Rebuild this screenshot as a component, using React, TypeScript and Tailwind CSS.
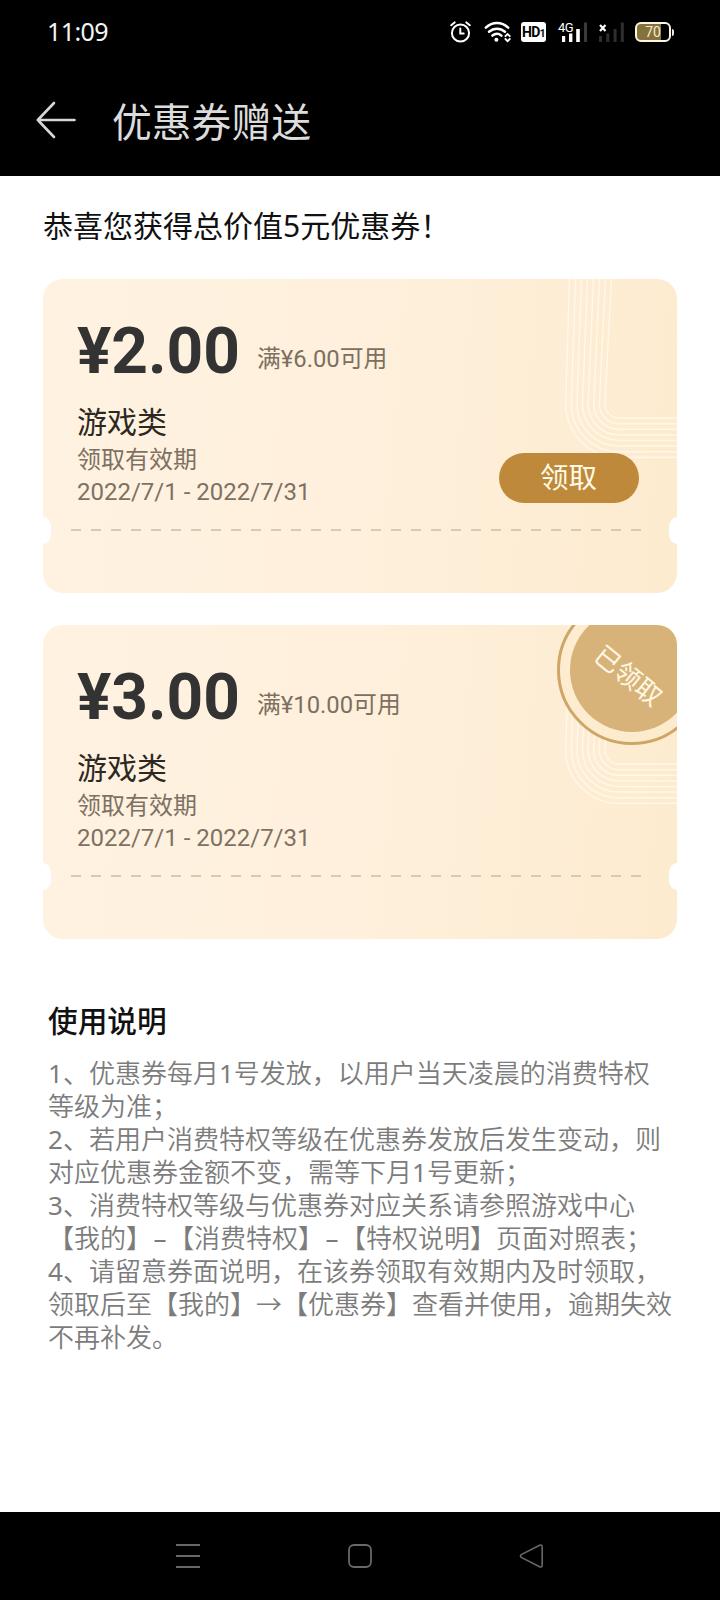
import type { ReactNode } from "react";

const CJK = "font-['Roboto','Noto_Sans_CJK_SC',sans-serif]";
const NOTO = "font-['Noto_Sans','Noto_Sans_CJK_SC',sans-serif]";

function StatusBar() {
  return (
    <div className="flex h-[64px] items-center pl-[47px] pr-[46px]">
      <span className={`${NOTO} -mt-[2px] text-[25px] leading-[30px] tracking-[-0.6px] text-[#f4f4f4]`}>11:09</span>
      <div className="ml-auto flex items-center text-white">
        <svg width="21" height="22" viewBox="0 0 21 22" fill="none" stroke="currentColor" strokeWidth="2" strokeLinecap="round">
          <circle cx="10.5" cy="12" r="8.6" />
          <path d="M10.3 7.5v5h3.4" />
          <path d="M1.2 4.2L4.6 1.4M19.8 4.2L16.4 1.4" />
        </svg>
        <svg className="ml-[13px]" width="28" height="22" viewBox="0 0 28 22" fill="none" stroke="currentColor" strokeWidth="2.5" strokeLinecap="round">
          <path d="M1.8 6.6C8.5 .4 17.5 .4 24.2 6.6" />
          <path d="M5 10.8C9.8 6.6 16.2 6.6 21 10.8" />
          <path d="M8.4 14.6C11.2 12.4 14.8 12.4 17.4 14.6" />
          <circle cx="12.4" cy="18.8" r="2" fill="currentColor" stroke="none" />
          <path d="M21.4 15.2L23.6 13l2.2 2.2M21.4 18l2.2 2.2L25.8 18" strokeWidth="1.8" />
        </svg>
        <div className="ml-[9px] flex h-[20px] w-[25px] items-center justify-center rounded-[3px] bg-white font-['Roboto',sans-serif] text-[14px] font-bold leading-[20px] tracking-[-0.6px] text-black">
          HD<span className="pt-[3px] text-[10px]">1</span>
        </div>
        <div className="relative ml-[12px] h-[20px] w-[30px]">
          <svg width="30" height="20" viewBox="0 0 30 20" fill="currentColor">
            <rect x="4" y="14" width="3.2" height="6" />
            <rect x="11" y="11.5" width="3.4" height="8.5" />
            <rect x="18.2" y="7" width="3.6" height="13" />
            <rect x="26" y="0.5" width="3" height="19.5" fill="#3a3a3a" />
          </svg>
          <span className="absolute left-0 -top-[1px] font-['Roboto',sans-serif] text-[13px] leading-[13px] tracking-[-0.6px]">4G</span>
        </div>
        <svg className="ml-[11px]" width="26" height="20" viewBox="0 0 26 20" fill="#2e2e2e">
          <rect x="0" y="14" width="3" height="6" />
          <rect x="7.3" y="11.5" width="3" height="8.5" />
          <rect x="14.6" y="7" width="3" height="13" />
          <rect x="21.8" y="0.5" width="3" height="19.5" />
          <path d="M1 3l5.5 6M6.5 3L1 9" stroke="#fff" strokeWidth="2.1" />
        </svg>
        <div className="ml-[10px] flex items-center">
          <div className="flex h-[20px] w-[36px] items-center justify-center rounded-[6px] border-2 border-[#fbf6e6] bg-[linear-gradient(90deg,#86713a_24px,#000_24px)] font-['Roboto',sans-serif] text-[14px] leading-[16px] text-[#f3ecd2]">
            70
          </div>
          <div className="ml-[1px] h-[7px] w-[2px] rounded-r-[2px] bg-[#e8e8e8]" />
        </div>
      </div>
    </div>
  );
}

function Ribbon() {
  const lines = Array.from({ length: 8 }, (_, i) => i);
  return (
    <svg className="absolute right-0 top-0" width="120" height="190" viewBox="0 0 120 190" fill="none" stroke="#fff7e8" strokeWidth="1.5">
      {lines.map((i) => {
        const top = 12.5 + i * 6;
        const x = 8.7 + i * 5.6;
        const r = 53.3 - i * 5.6;
        return <path key={i} d={`M${top} -1L${x} 125A${r} ${r} 0 0 0 62 ${125 + r}H121`} />;
      })}
    </svg>
  );
}

function ClaimedSeal() {
  return (
    <div className="absolute left-[514px] top-[-30px] flex size-[150px] items-center justify-center rounded-full border-[3px] border-[#cfa665] bg-[#fdebcd]/80">
      <div className="flex size-[124px] items-center justify-center rounded-full bg-[#d8b379]">
        <span className="translate-x-[-4px] translate-y-[6px] rotate-[39deg] whitespace-nowrap text-[26px] leading-[30px] text-[#fff8e4]">已领取</span>
      </div>
    </div>
  );
}

function Coupon({ price, rule, children }: { price: string; rule: string; children: ReactNode }) {
  return (
    <section className={`${CJK} relative h-[314px] overflow-hidden rounded-[20px] bg-[linear-gradient(95deg,#fff2e1,#fef0dc_50%,#fdebcf)]`}>
      <Ribbon />
      <div className="flex flex-col pl-[34px] pt-[35px]">
        <div className="flex items-baseline">
          <span className="text-[64px] font-bold leading-[76px] text-[#333]">{price}</span>
          <span className="ml-[17px] -translate-y-[6px] text-[23.8px] leading-[30px] text-[#7c6f60]">{rule}</span>
        </div>
        <h2 className="mt-[14px] text-[30px] leading-[38px] text-[#2d2822]">游戏类</h2>
        <p className="mt-[2px] text-[24px] leading-[32px] text-[#7e7163]">领取有效期</p>
        <p className="text-[24px] leading-[32px] text-[#7e7163]">2022/7/1 - 2022/7/31</p>
      </div>
      <div className="absolute left-[28px] top-[250px] h-[2px] w-[570px] bg-[repeating-linear-gradient(90deg,#d9c9b3_0_10px,transparent_10px_20px)]" />
      <div className="absolute left-0 top-[238px] h-[27px] w-[8px] bg-white [border-radius:0_8px_8px_0/0_10px_10px_0]" />
      <div className="absolute right-0 top-[238px] h-[27px] w-[8px] bg-white [border-radius:8px_0_0_8px/10px_0_0_10px]" />
      {children}
    </section>
  );
}

const notes = [
  "1、优惠券每月1号发放，以用户当天凌晨的消费特权",
  "等级为准；",
  "2、若用户消费特权等级在优惠券发放后发生变动，则",
  "对应优惠券金额不变，需等下月1号更新；",
  "3、消费特权等级与优惠券对应关系请参照游戏中心",
  "【我的】–【消费特权】–【特权说明】页面对照表；",
  "4、请留意券面说明，在该券领取有效期内及时领取，",
  "领取后至【我的】→【优惠券】查看并使用，逾期失效",
  "不再补发。",
];

function NoteLine({ text }: { text: string }) {
  return (
    <p className="h-[33px] whitespace-nowrap">
      {text.split(/([–\d])/).map((part, i) => {
        if (part === "–") {
          return <span key={i} className="inline-block w-[16px] text-center font-normal">–</span>;
        }
        return /^\d$/.test(part) ? <span key={i} className="font-normal">{part}</span> : part;
      })}
    </p>
  );
}

export default function App() {
  return (
    <div className="flex h-[1600px] w-[720px] flex-col overflow-hidden bg-white">
      <header className="h-[176px] bg-black">
        <StatusBar />
        <div className="flex h-[112px] items-center pl-[36px]">
          <svg width="40" height="38" viewBox="0 0 40 38" fill="none" stroke="#d6d6d6" strokeWidth="2.6" strokeLinecap="round" strokeLinejoin="round">
            <path d="M18 2L1.8 19L18 36M1.8 19H38.5" />
          </svg>
          <h1 className={`${CJK} ml-[36px] pt-[8px] text-[39.8px] leading-[48px] text-[#dcdcdc]`}>优惠券赠送</h1>
        </div>
      </header>

      <main className="flex-1 px-[43px]">
        <p className={`${NOTO} pt-[30px] text-[30px] leading-[40px] text-[#111]`}>恭喜您获得总价值5元优惠券！</p>
        <div className="mt-[33px] flex flex-col gap-[32px]">
          <Coupon price="¥2.00" rule="满¥6.00可用">
            <button className="absolute left-[456px] top-[174px] h-[50px] w-[140px] rounded-full bg-[#be893a] pr-[1px] pt-[2px] text-[28.5px] leading-[48px] text-[#fff9e6]">领取</button>
          </Coupon>
          <Coupon price="¥3.00" rule="满¥10.00可用">
            <ClaimedSeal />
          </Coupon>
        </div>
        <section className={`${NOTO} pl-[5px]`}>
          <h2 className="mt-[62px] text-[29.7px] font-medium leading-[40px] text-[#111]">使用说明</h2>
          <div className="mt-[16px] text-[26px] font-[350] leading-[33px] text-[#7c7c7c]">
            {notes.map((line) => (
              <NoteLine key={line} text={line} />
            ))}
          </div>
        </section>
      </main>

      <nav className="flex h-[88px] items-center bg-black px-[102px] text-[#686868]">
        <svg className="flex-1" height="26" viewBox="0 0 26 26" fill="none" stroke="currentColor" strokeWidth="1.8">
          <path d="M1 2H25M1 13H25M1 24H25" />
        </svg>
        <svg className="flex-1" height="26" viewBox="0 0 26 26" fill="none" stroke="currentColor" strokeWidth="1.8">
          <rect x="2" y="2" width="22" height="22" rx="5" />
        </svg>
        <svg className="flex-1" height="26" viewBox="0 0 26 26" fill="none" stroke="currentColor" strokeWidth="1.6" strokeLinejoin="round">
          <path d="M2.2 11.6L20.6 2.2Q23.2 1.3 23.2 4V22Q23.2 24.7 20.6 23.8L2.2 14.4Q.8 13 2.2 11.6Z" />
        </svg>
      </nav>
    </div>
  );
}
